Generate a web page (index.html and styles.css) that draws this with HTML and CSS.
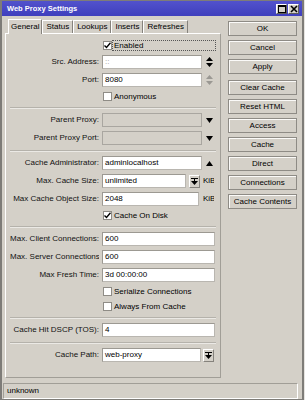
FILE: index.html
```html
<!DOCTYPE html>
<html lang="en">
<head>
  <meta charset="UTF-8">
  <title>Web Proxy Settings</title>
  <link rel="stylesheet" href="styles.css">
</head>
<body>
  <div class="window">
    <div class="titlebar">
      <span class="title">Web Proxy Settings</span>
      <div class="title-btns">
        <span class="tbtn"><svg width="8" height="8" viewBox="0 0 8 8"><rect x="0.5" y="0.5" width="7" height="7" fill="none" stroke="#000"/><rect x="0" y="0" width="8" height="2" fill="#000"/></svg></span>
        <span class="tbtn"><svg width="8" height="8" viewBox="0 0 8 8"><path d="M1 1L7 7M7 1L1 7" stroke="#000" stroke-width="1.6"/></svg></span>
      </div>
    </div>

    <div class="body">
      <div class="left">
        <div class="tabs">
          <div class="tab active">General</div>
          <div class="tab">Status</div>
          <div class="tab">Lookups</div>
          <div class="tab">Inserts</div>
          <div class="tab">Refreshes</div>
        </div>

        <div class="panel">
          <div class="row check">
            <span class="lbl"></span>
            <span class="cbx on"><svg width="7" height="7" viewBox="0 0 7 7"><path d="M0.5 3.5L2.5 5.5L6.5 0.8" fill="none" stroke="#000" stroke-width="1.4"/></svg></span>
            <span class="cb-text focus">Enabled</span>
          </div>
          <div class="row">
            <span class="lbl">Src. Address:</span>
            <span class="field w100 dim">::</span>
            <span class="ico"><svg width="7" height="10" viewBox="0 0 7 10"><path d="M3.5 0L7 4H0Z M0 6H7L3.5 10Z"/></svg></span>
          </div>
          <div class="row">
            <span class="lbl">Port:</span>
            <span class="field w100">8080</span>
            <span class="ico"><svg width="7" height="10" viewBox="0 0 7 10"><path d="M3.5 0L7 4H0Z M0 6H7L3.5 10Z" fill="#9a9893"/></svg></span>
          </div>
          <div class="row check">
            <span class="lbl"></span>
            <span class="cbx"></span>
            <span class="cb-text">Anonymous</span>
          </div>
          <div class="sep"></div>
          <div class="row">
            <span class="lbl">Parent Proxy:</span>
            <span class="field w100 off"></span>
            <span class="ico"><svg width="7" height="5" viewBox="0 0 7 5"><path d="M0 0H7L3.5 5Z"/></svg></span>
          </div>
          <div class="row">
            <span class="lbl">Parent Proxy Port:</span>
            <span class="field w100 off"></span>
            <span class="ico"><svg width="7" height="5" viewBox="0 0 7 5"><path d="M0 0H7L3.5 5Z"/></svg></span>
          </div>
          <div class="sep"></div>
          <div class="row">
            <span class="lbl">Cache Administrator:</span>
            <span class="field w100">adminlocalhost</span>
            <span class="ico"><svg width="7" height="5" viewBox="0 0 7 5"><path d="M3.5 0L7 5H0Z"/></svg></span>
          </div>
          <div class="row">
            <span class="lbl">Max. Cache Size:</span>
            <span class="field w84">unlimited</span>
            <span class="dbtn"><svg width="7" height="7" viewBox="0 0 7 7"><path d="M0 0H7V1H0Z M3 1H4V3H3Z M0 3H7L3.5 7Z"/></svg></span>
            <span class="unit">KiB</span>
          </div>
          <div class="row">
            <span class="lbl">Max Cache Object Size:</span>
            <span class="field w97">2048</span>
            <span class="unit">KiB</span>
          </div>
          <div class="row check">
            <span class="lbl"></span>
            <span class="cbx on"><svg width="7" height="7" viewBox="0 0 7 7"><path d="M0.5 3.5L2.5 5.5L6.5 0.8" fill="none" stroke="#000" stroke-width="1.4"/></svg></span>
            <span class="cb-text">Cache On Disk</span>
          </div>
          <div class="sep"></div>
          <div class="row">
            <span class="lbl">Max. Client Connections:</span>
            <span class="field wide">600</span>
          </div>
          <div class="row">
            <span class="lbl">Max. Server Connections:</span>
            <span class="field wide">600</span>
          </div>
          <div class="row">
            <span class="lbl">Max Fresh Time:</span>
            <span class="field wide">3d 00:00:00</span>
          </div>
          <div class="row check">
            <span class="lbl"></span>
            <span class="cbx"></span>
            <span class="cb-text">Serialize Connections</span>
          </div>
          <div class="row check">
            <span class="lbl"></span>
            <span class="cbx"></span>
            <span class="cb-text">Always From Cache</span>
          </div>
          <div class="sep"></div>
          <div class="row">
            <span class="lbl">Cache Hit DSCP (TOS):</span>
            <span class="field wide">4</span>
          </div>
          <div class="sep"></div>
          <div class="row">
            <span class="lbl">Cache Path:</span>
            <span class="field w99">web-proxy</span>
            <span class="dbtn path"><svg width="7" height="7" viewBox="0 0 7 7"><path d="M0 0H7V1H0Z M3 1H4V3H3Z M0 3H7L3.5 7Z"/></svg></span>
          </div>
        </div>
      </div>

      <div class="actions">
        <button class="btn">OK</button>
        <button class="btn">Cancel</button>
        <button class="btn">Apply</button>
        <button class="btn group">Clear Cache</button>
        <button class="btn">Reset HTML</button>
        <button class="btn">Access</button>
        <button class="btn">Cache</button>
        <button class="btn">Direct</button>
        <button class="btn">Connections</button>
        <button class="btn">Cache Contents</button>
      </div>
    </div>

    <div class="status">unknown</div>
  </div>
</body>
</html>
```

FILE: styles.css
```css
:root {
  --face: #d4d0c8;
  --shade: #a19e97;
  --dark: #85827c;
  --title: #4646c4;
}
*, *::before, *::after { box-sizing: border-box; margin: 0; padding: 0; }
html { background: #e6e4e0; }
body {
  font-family: 'Liberation Sans', Arial, sans-serif;
  font-size: 8px; color: #000; line-height: 1;
}

.window {
  width: 304px; height: 400px;
  background: var(--face);
  border: 1px solid #7e7c78; border-left-width: 2px; border-right-width: 2px;
  display: flex; flex-direction: column;
}

/* title bar */
.titlebar {
  height: 15px; flex: none;
  display: flex; align-items: center; justify-content: space-between;
  background: linear-gradient(#5252cc, #3f3fbd);
  padding: 0 3px 0 5px;
}
.title { color: #fff; font-weight: bold; font-size: 7.5px; }
.title-btns { display: flex; gap: 1px; }
.tbtn {
  width: 11px; height: 10px;
  display: flex; align-items: center; justify-content: center;
  background: var(--face);
  border: 1px solid #fff; border-right-color: #5e5c58; border-bottom-color: #5e5c58;
}

/* main area */
.body {
  flex: 1; display: flex; gap: 7px;
  padding: 3px 5px 5px 3px;
}
.left { width: 216px; display: flex; flex-direction: column; }

.tabs { display: flex; align-items: flex-end; height: 14px; padding-left: 3px; }
.tab {
  height: 13px; padding: 0 3px;
  display: flex; align-items: center;
  border: 1px solid #fff; border-bottom: none; border-right-color: var(--dark);
  background: var(--face);
}
.tab.active {
  height: 15px; margin-bottom: -1px; padding: 0 2px;
  position: relative; z-index: 1;
}

.panel {
  flex: 1;
  border: 1px solid #fff; border-right-color: var(--shade); border-bottom-color: var(--shade);
  padding: 6px 0 0 4px;
}

.row { display: flex; align-items: center; height: 14px; margin-top: 4px; }
.row:first-child { margin-top: 0; }
.row.check { height: 11px; }

.lbl {
  width: 89px; flex: none; overflow: hidden; white-space: nowrap;
  text-align: right; margin-right: 3px; color: #111;
}

.field {
  height: 14px; flex: none;
  background: #fff;
  border: 1px solid #b9b6b0; border-top-color: #9c9992; border-left-color: #9c9992;
  padding: 0 2px; line-height: 12px; white-space: nowrap; overflow: hidden;
}
.field.dim { color: #9a9893; }
.field.off { background: var(--face); border-color: #a9a6a0; }
.w100 { width: 100px; }
.w84 { width: 84px; }
.w97 { width: 97px; }
.w99 { width: 99px; }
.wide { width: 113px; }

.ico { width: 10px; margin-left: 2px; display: flex; justify-content: center; }

.dbtn {
  width: 11px; height: 13px; margin-left: 3px;
  display: flex; align-items: center; justify-content: center;
  border: 1px solid #fff; border-right-color: var(--dark); border-bottom-color: var(--dark);
}
.dbtn.path { margin-left: 2px; }
.unit { width: 11px; margin-left: 3px; overflow: hidden; white-space: nowrap; }
.w97 + .unit { margin-left: 4px; }

.cbx {
  width: 9px; height: 9px; flex: none; margin-left: 1px;
  background: #fff; border: 1px solid #8f8c86;
  display: flex; align-items: center; justify-content: center;
}
.cb-text { margin-left: 2px; }
.cb-text.focus {
  margin-left: 0; width: 104px; height: 11px;
  border: 1px dotted #555; padding-left: 1px;
  display: flex; align-items: center;
}

.sep {
  border-top: 1px solid #b5b2ab; border-bottom: 1px solid #ebe9e5;
  margin: 5px 4px 0 0;
}

/* right button column */
.actions { width: 69px; display: flex; flex-direction: column; gap: 4px; padding-top: 2px; }
.btn {
  height: 15px; width: 69px;
  font-family: inherit; font-size: 8px; color: #000;
  background: var(--face);
  border: 1px solid #8e8b85;
  box-shadow: inset 1px 1px 0 #fbfaf8;
}
.btn.group { margin-top: 2px; }

.status {
  height: 16px; flex: none; margin: 0 4px 0 1px;
  border: 1px solid #fff; border-top-color: var(--shade); border-left-color: var(--shade);
  padding-left: 3px; display: flex; align-items: center;
}
```
